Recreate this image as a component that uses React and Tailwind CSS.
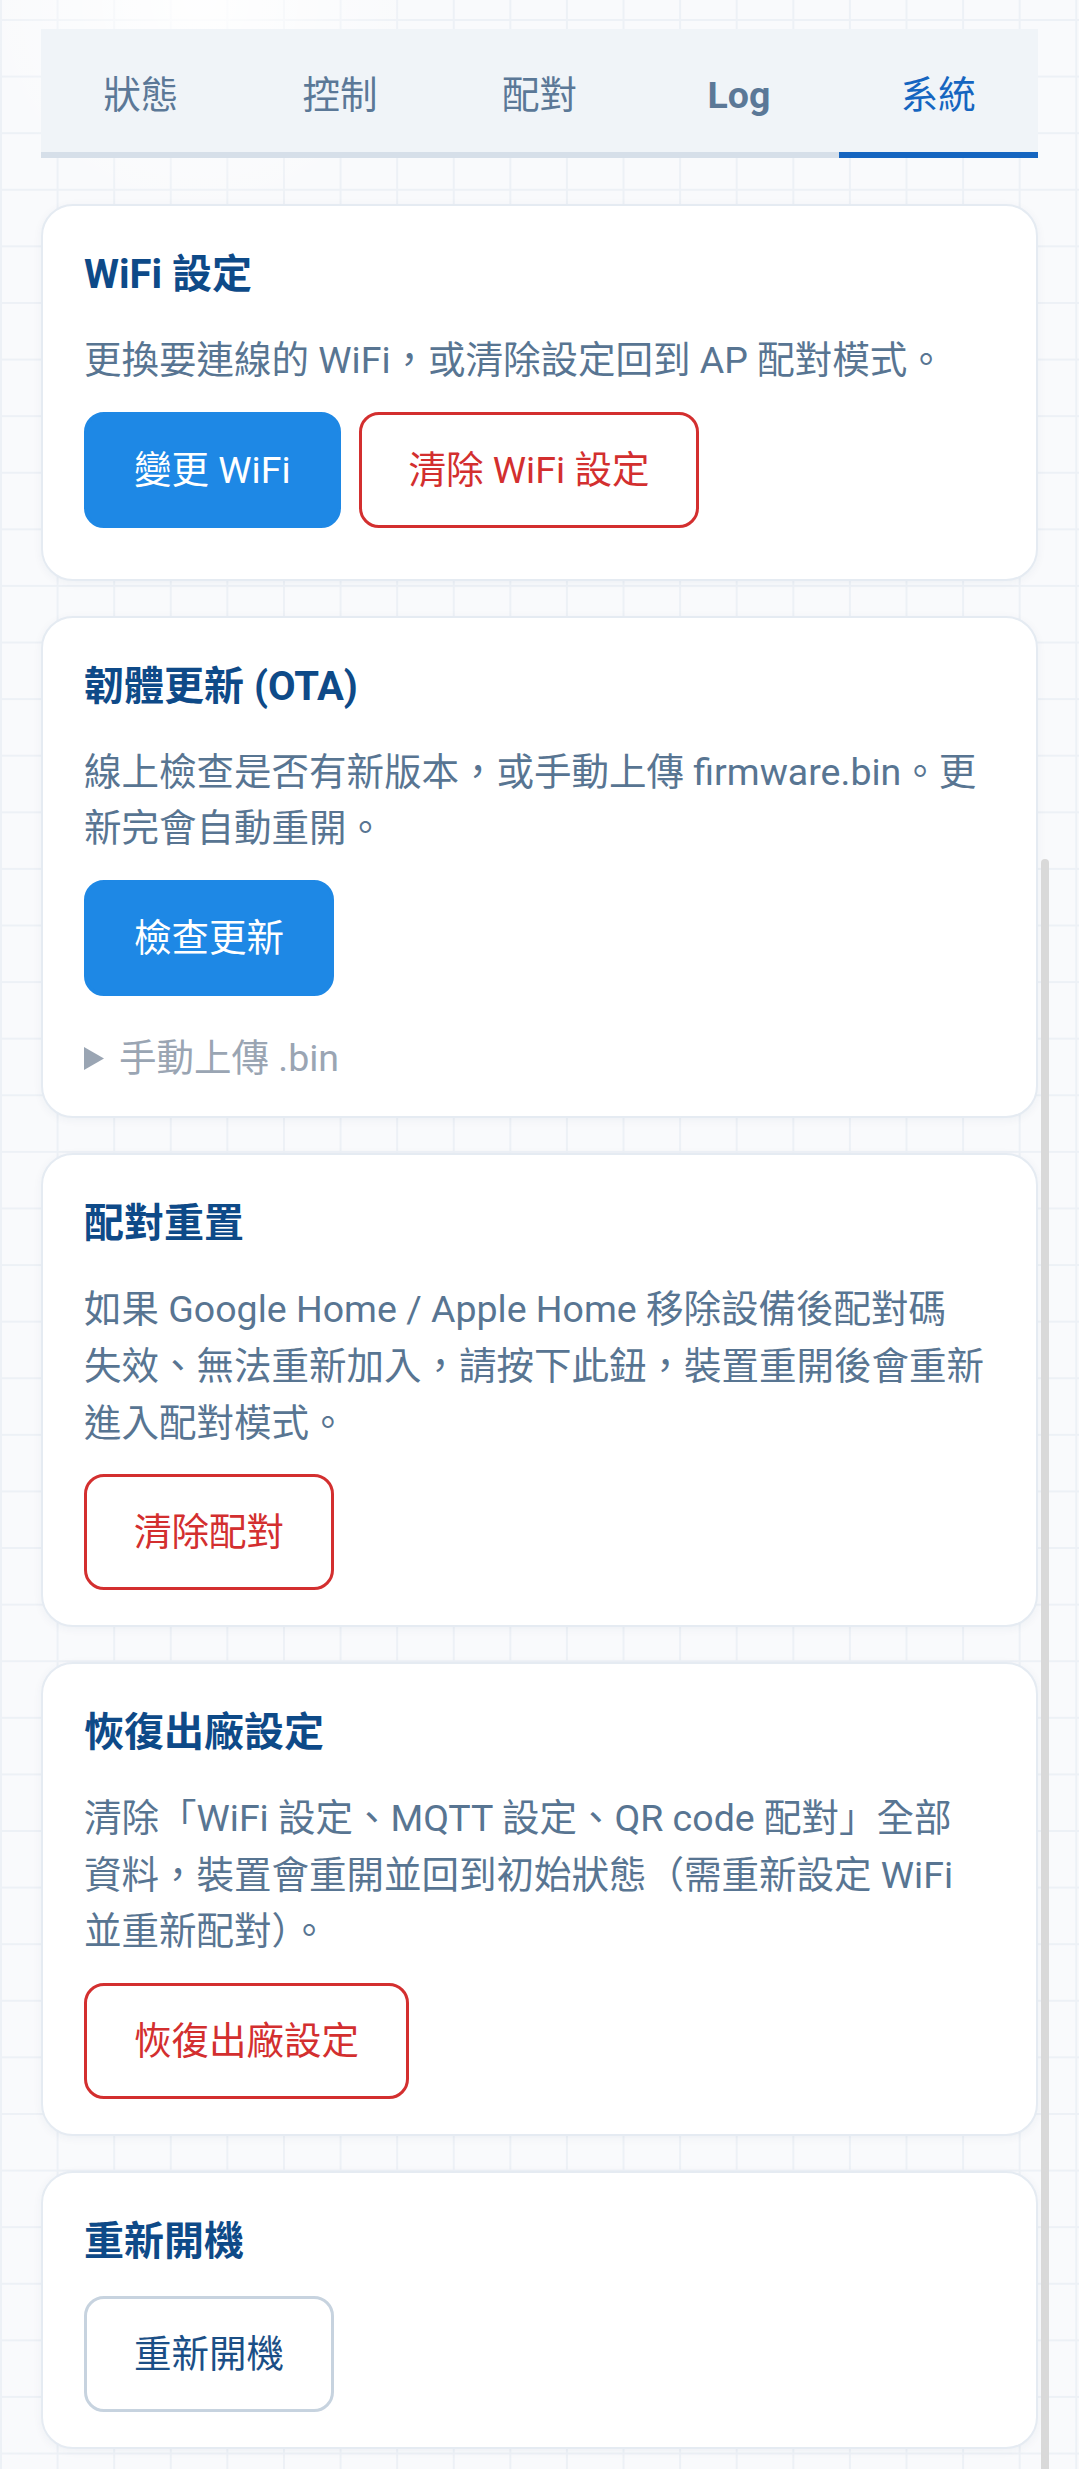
import React, { useState } from "react";

const TABS = ["狀態", "控制", "配對", "Log", "系統"];

const FONT = "font-['Roboto','Noto_Sans_CJK_TC',sans-serif]";

function Tabs({ active, onChange }) {
  return (
    <div className="flex h-[129px] bg-[#f0f4f8]">
      {TABS.map((t) => {
        const on = t === active;
        return (
          <button
            key={t}
            onClick={() => onChange(t)}
            className={
              "flex-1 flex items-center justify-center pt-[9px] text-[37.5px] border-b-[6px] " +
              (on
                ? "border-[#1565c0] text-[#1565c0]"
                : "border-[#d6dfe9] text-[#5b7897]") +
              (t === "Log" ? " font-bold" : "")
            }
          >
            {t}
          </button>
        );
      })}
    </div>
  );
}

function Card({ title, children, className = "" }) {
  return (
    <section
      className={
        "rounded-[32px] border-2 border-[#e5ebf2] bg-white px-[41px] pt-[43px] shadow-[0_2px_10px_rgba(20,50,90,0.05)] " +
        className
      }
    >
      <h2 className="text-[40px] leading-[52px] font-bold text-[#0e4a88]">
        {title}
      </h2>
      {children}
    </section>
  );
}

const Desc = ({ children }) => (
  <p className="mt-[31px] text-[37.5px] leading-[56.6px] text-[#587592]">
    {children}
  </p>
);

const btnBase =
  "rounded-[20px] border-[3px] px-[47px] py-[33px] text-[37.5px] leading-[44px]";

const PrimaryBtn = ({ children }) => (
  <button className={btnBase + " border-[#1e88e5] bg-[#1e88e5] text-white"}>
    {children}
  </button>
);

const DangerBtn = ({ children }) => (
  <button className={btnBase + " border-[#d32f2f] bg-white text-[#d32f2f]"}>
    {children}
  </button>
);

const PlainBtn = ({ children }) => (
  <button className={btnBase + " border-[#c7d3df] bg-white text-[#1b4f86]"}>
    {children}
  </button>
);

export default function App() {
  const [tab, setTab] = useState("系統");

  return (
    <div
      className={
        FONT +
        " relative h-screen w-full overflow-hidden bg-[#f9fafc] bg-[radial-gradient(circle_at_200px_0px,rgba(255,255,255,0.9),transparent_220px),linear-gradient(#edf1f6_2px,transparent_2px),linear-gradient(90deg,#edf1f6_2px,transparent_2px)] bg-[size:100%_100%,56.6px_56.6px,56.6px_56.6px] bg-[position:0_0,0_19px,0_19px]"
      }
    >
      <div className="px-[41px] pt-[29px]">
        <Tabs active={tab} onChange={setTab} />

        <div className="mt-[46px] flex flex-col gap-[35px]">
          <Card title="WiFi 設定" className="pb-[51px]">
            <Desc>更換要連線的 WiFi，或清除設定回到 AP 配對模式。</Desc>
            <div className="mt-[23px] flex gap-[18px]">
              <PrimaryBtn>變更 WiFi</PrimaryBtn>
              <DangerBtn>清除 WiFi 設定</DangerBtn>
            </div>
          </Card>

          <Card title="韌體更新 (OTA)" className="pb-[30px]">
            <Desc>
              線上檢查是否有新版本，或手動上傳 firmware.bin。更
              <br />
              新完會自動重開。
            </Desc>
            <div className="mt-[23px] flex">
              <PrimaryBtn>檢查更新</PrimaryBtn>
            </div>
            <details className="mt-[34px] text-[37.5px] leading-[56.6px] text-[#9aa5b3]">
              <summary className="flex list-none items-center gap-[15px] [&::-webkit-details-marker]:hidden">
                <svg width="20" height="23" viewBox="0 0 20 23" className="shrink-0">
                  <polygon points="0,0 20,11.5 0,23" fill="#9aa5b3" />
                </svg>
                <span>手動上傳 .bin</span>
              </summary>
            </details>
          </Card>

          <Card title="配對重置" className="pb-[35px]">
            <Desc>
              如果 Google Home / Apple Home 移除設備後配對碼
              <br />
              失效、無法重新加入，請按下此鈕，裝置重開後會重新
              <br />
              進入配對模式。
            </Desc>
            <div className="mt-[23px] flex">
              <DangerBtn>清除配對</DangerBtn>
            </div>
          </Card>

          <Card title="恢復出廠設定" className="pb-[35px]">
            <Desc>
              清除「WiFi 設定、MQTT 設定、QR code 配對」全部
              <br />
              資料，裝置會重開並回到初始狀態（需重新設定 WiFi
              <br />
              並重新配對）。
            </Desc>
            <div className="mt-[23px] flex">
              <DangerBtn>恢復出廠設定</DangerBtn>
            </div>
          </Card>

          <Card title="重新開機" className="pb-[35px]">
            <div className="mt-[28px] flex">
              <PlainBtn>重新開機</PlainBtn>
            </div>
          </Card>
        </div>
      </div>

      {/* overlay scroll thumb */}
      <div className="absolute left-[1041px] top-[859px] bottom-0 w-[8px] rounded-t-full bg-[#d9d9d9]" />
    </div>
  );
}
